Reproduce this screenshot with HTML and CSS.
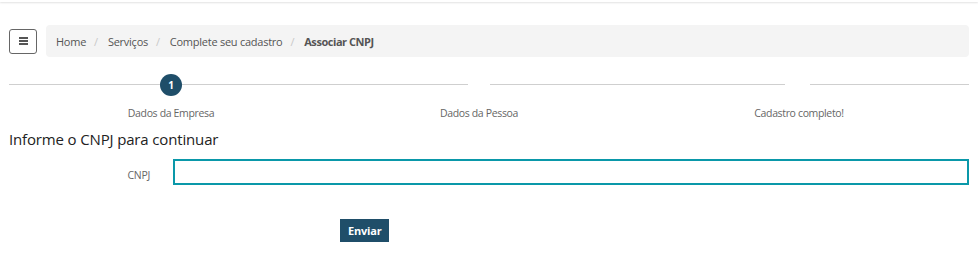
FILE: index.html
```html
<!DOCTYPE html>
<html lang="pt-BR">
<head>
<meta charset="utf-8">
<title>Associar CNPJ</title>
<link rel="stylesheet" href="styles.css">
</head>
<body>
<div class="topbar"></div>
<div class="container">
  <div class="header-row">
    <button class="menu-btn" type="button" aria-label="Menu">
      <span class="bar"></span><span class="bar"></span><span class="bar"></span>
    </button>
    <ol class="breadcrumb">
      <li><a href="#">Home</a></li>
      <li class="sep">/</li>
      <li><a href="#">Serviços</a></li>
      <li class="sep">/</li>
      <li><a href="#">Complete seu cadastro</a></li>
      <li class="sep">/</li>
      <li class="active">Associar CNPJ</li>
    </ol>
  </div>

  <div class="stepper">
    <div class="step step-1">
      <div class="track"><span class="line"></span><span class="dot active">1</span><span class="line"></span></div>
      <div class="step-label">Dados da Empresa</div>
    </div>
    <div class="step step-2">
      <div class="track"><span class="line"></span><span class="dot"></span><span class="line"></span></div>
      <div class="step-label">Dados da Pessoa</div>
    </div>
    <div class="step step-3">
      <div class="track"><span class="line"></span><span class="dot wide"></span><span class="line"></span></div>
      <div class="step-label">Cadastro completo!</div>
    </div>
  </div>

  <h2 class="title">Informe o CNPJ para continuar</h2>

  <form class="form">
    <div class="form-row">
      <label class="form-label" for="cnpj">CNPJ</label>
      <input class="form-input" id="cnpj" type="text">
    </div>
    <div class="actions">
      <button class="btn-primary" type="button">Enviar</button>
    </div>
  </form>
</div>
</body>
</html>
```

FILE: styles.css
```css
* { box-sizing: border-box; }

body {
  margin: 0;
  background: #fff;
  font-family: "Open Sans", "Noto Sans", "Liberation Sans", sans-serif;
  color: #333;
}

.topbar {
  height: 2px;
  background: #fff;
  box-shadow: 0 1px 2px rgba(0, 0, 0, 0.12);
}

.container {
  padding: 0 9px;
}

.header-row {
  display: flex;
  align-items: center;
  gap: 9px;
  margin-top: 23px;
}

.menu-btn {
  width: 28px;
  height: 25px;
  border: 1px solid #666;
  border-radius: 3px;
  background: #fff;
  padding: 0;
  display: flex;
  flex-direction: column;
  align-items: center;
  justify-content: center;
  gap: 1.5px;
}

.menu-btn .bar {
  display: block;
  width: 9px;
  height: 1.5px;
  background: #555;
}

.breadcrumb {
  flex: 1;
  display: flex;
  align-items: center;
  height: 32px;
  margin: 0;
  padding: 0 10px;
  list-style: none;
  background: #f4f4f4;
  border-radius: 4px;
  font-size: 11px;
  letter-spacing: -0.25px;
}

.breadcrumb a {
  color: #555;
  text-decoration: none;
}

.breadcrumb .sep {
  color: #c8c8c8;
  margin: 0 10px 0 8px;
}

.breadcrumb .active {
  color: #555;
  font-weight: 700;
  letter-spacing: -0.45px;
}

.stepper {
  display: grid;
  grid-template-columns: 324px 292px 344px;
  margin-top: 17px;
}

.track {
  display: flex;
  align-items: flex-start;
  height: 22px;
}

.line {
  flex: 1;
  height: 1px;
  margin-top: 10px;
  background: #cfcfcf;
}

.dot {
  width: 22px;
  height: 22px;
  border-radius: 50%;
  background: #fff;
  display: flex;
  align-items: center;
  justify-content: center;
  font-size: 10px;
  font-weight: 700;
  color: #fff;
}

.dot.wide { width: 25px; }

.dot.active {
  background: #1f4e69;
}

.step-label {
  margin-top: 10px;
  text-align: center;
  font-size: 10.5px;
  letter-spacing: -0.35px;
  line-height: 15px;
  color: #666;
}

.step-3 .step-label { padding-left: 4px; }

.title {
  margin: 8px 0 0;
  font-size: 15px;
  letter-spacing: -0.15px;
  line-height: 20px;
  font-weight: 400;
  color: #222;
}

.form {
  margin-top: 10px;
}

.form-row {
  display: grid;
  grid-template-columns: 141px 1fr;
  column-gap: 23px;
  align-items: center;
}

.form-label {
  text-align: right;
  font-size: 10.5px;
  letter-spacing: -0.3px;
  color: #666;
  padding-top: 5px;
}

.form-input {
  height: 26px;
  border: 2px solid #0a98a9;
  border-radius: 0;
  outline: none;
  padding: 0 8px;
  font: inherit;
  font-size: 12px;
}

.actions {
  margin-top: 33px;
  padding-left: 331px;
}

.btn-primary {
  height: 23px;
  padding: 0 8px;
  border: none;
  border-radius: 0;
  background: #1f4e69;
  color: #fff;
  font-family: inherit;
  font-size: 11px;
  letter-spacing: -0.2px;
  font-weight: 700;
}
```
